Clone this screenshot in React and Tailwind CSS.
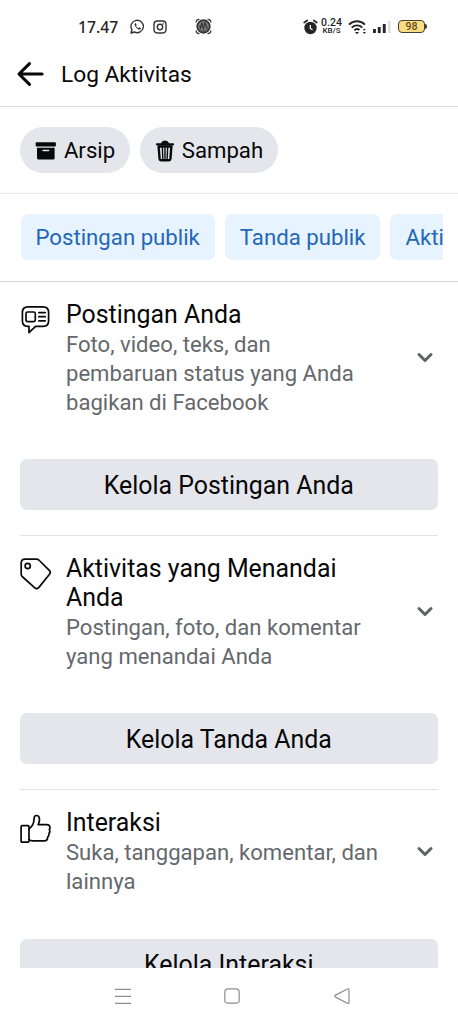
const SHORTCUTS = [
  { id: "archive", label: "Arsip" },
  { id: "trash", label: "Sampah" },
];

const FILTERS = ["Postingan publik", "Tanda publik", "Aktivitas"];

const SECTIONS = [
  {
    id: "post",
    title: "Postingan Anda",
    desc: "Foto, video, teks, dan pembaruan status yang Anda bagikan di Facebook",
    button: "Kelola Postingan Anda",
  },
  {
    id: "tag",
    title: "Aktivitas yang Menandai Anda",
    desc: "Postingan, foto, dan komentar yang menandai Anda",
    button: "Kelola Tanda Anda",
  },
  {
    id: "like",
    title: "Interaksi",
    desc: "Suka, tanggapan, komentar, dan lainnya",
    button: "Kelola Interaksi",
  },
];

function ShortcutIcon({ name }) {
  if (name === "archive") {
    return (
      <svg width="22" height="20" viewBox="0 0 22 20" fill="#080809" className="shrink-0">
        <rect x="0.7" y="1.2" width="20.2" height="4.4" rx="1" />
        <path d="M2 6.700h17.600v10.200a1.600 1.600 0 0 1-1.600 1.600H3.600A1.600 1.600 0 0 1 2 16.900z" />
        <rect x="7.300" y="8.700" width="7" height="1.600" rx="0.800" fill="#e4e6eb" />
      </svg>
    );
  }
  return (
    <svg width="20" height="22" viewBox="0 0 20 22" fill="none" stroke="#080809" className="shrink-0">
      <path d="M2 4.300h16" strokeWidth="2.200" strokeLinecap="round" />
      <path d="M6.300 3.600C7 1.300 8 1 10 1s3 .3 3.700 2.600z" fill="#080809" strokeWidth="0.600" />
      <path d="M3.600 6.500l1 12.200q.2 1.600 1.800 1.600h7.200q1.600 0 1.800-1.600l1-12.200z" strokeWidth="2.400" strokeLinejoin="round" />
      <path d="M7.400 8l.4 10.500M12.600 8l-.4 10.500M10 8v10.500" strokeWidth="1.400" strokeLinecap="round" />
    </svg>
  );
}

function SectionIcon({ name }) {
  return (
    <svg
      width="32"
      height="32"
      viewBox="0 0 32 32"
      fill="none"
      stroke="#080809"
      strokeWidth="1.700"
      strokeLinejoin="round"
      strokeLinecap="round"
      className="shrink-0"
    >
      {name === "post" && (
        <>
          <path d="M7.500 2.800H23q5.600 0 5.600 5.600v8.400q0 5.600-5.600 5.600H15.500L9 28.600v-6.200H8q-5.600 0-5.600-5.600V8.400q0-5.600 5.600-5.600z" />
          <rect x="6" y="8" width="9.300" height="9.600" rx="1.600" />
          <path d="M18.800 8.600h6.400M18.800 12.700h6.400M18.800 16.800h6.400" />
        </>
      )}
      {name === "tag" && (
        <>
          <path d="M5 1.100h11.500q1.300 0 2.300.9l10.500 10.400q2 2.100 0 4.100L18.700 29.600q-2.100 2-4.200 0L2.200 18.500q-1-.9-1-2.300V4.900q0-3.800 3.800-3.800z" />
          <circle cx="7.700" cy="8" r="2.600" />
        </>
      )}
      {name === "like" && (
        <>
          <path d="M2.100 13.700h5.900q1 0 1 1v14.400q0 1-1 1H2.100q-1 0-1-1V14.700q0-1 1-1z" />
          <path d="M9 17c3.500-2.700 5-5.300 5-9.500 0-2.300.7-4 2.300-4 2.100 0 3.200 1.700 3.200 4.200 0 2.100-.7 3.500-1.300 5h8.200c2 0 3.600 1.300 3.600 3 0 .8-.3 1.400-.7 1.900.8 1.400.6 3-.4 4 .3 1.600-.2 2.900-1.200 3.500-.1 2.300-1.200 3.700-3.300 3.700H12.400q-2 0-3.400-1.300" />
        </>
      )}
    </svg>
  );
}

function StatusBar() {
  return (
    <div className="flex h-[46px] shrink-0 items-center pt-[7px] pr-[31px] pl-[78px] text-[#252525]">
      <span className="w-[52px] font-['Noto_Sans'] text-[15.700px] leading-5 font-medium">17.47</span>
      {/* WhatsApp */}
      <svg width="15" height="15" viewBox="0 0 15 15" fill="none" stroke="#333" strokeWidth="1.400">
        <path d="M1 14l.9-3.300A6.200 6.200 0 1 1 4.400 13z" strokeLinejoin="round" />
        <path d="M5.500 4c-1.200.5-1.200 1.700-.3 3.200 1 1.700 2.600 3 4 3.400 1 .2 1.800-.5 1.900-1.300L9.300 8.300l-.9.900C7.300 8.700 6.500 7.800 6 6.900l.7-.9z" fill="#333" stroke="none" />
      </svg>
      {/* Instagram */}
      <svg width="14" height="14" viewBox="0 0 14 14" fill="none" stroke="#333" strokeWidth="1.400" className="ml-2">
        <rect x="1" y="1" width="12" height="12" rx="3.400" />
        <circle cx="7" cy="7" r="2.700" />
        <circle cx="10.300" cy="3.700" r="0.200" />
      </svg>
      {/* Emblem */}
      <svg width="17" height="17" viewBox="0 0 17 17" fill="none" stroke="#333" className="ml-[28px]">
        <circle cx="8.500" cy="8.500" r="6.300" fill="#808080" strokeWidth="1.700" />
        <path d="M1.200 4.500q-.3-3 3.300-3.200M15.800 4.500q.3-3-3.300-3.200M1.200 12.500q-.3 3 3.300 3.200M15.800 12.500q.3 3-3.300 3.200" strokeWidth="1.300" />
        <path d="M5 11.500L7 4.500l1.500 7L10 4.500l2.500 7M4 8.500h3M6 13h5" strokeWidth="1.100" />
      </svg>

      <div className="ml-auto flex items-center">
        <svg width="15" height="16" viewBox="0 0 15 16" fill="none" stroke="#252525">
          <circle cx="7.500" cy="9" r="6.200" fill="#252525" stroke="none" />
          <path d="M1.200 3.500l3-2M13.800 3.500l-3-2" strokeWidth="1.700" strokeLinecap="round" />
          <path d="M7.300 6v3.400l2.200 1.300" stroke="#fff" strokeWidth="1.200" />
        </svg>
        <div className="ml-[2px] flex w-[23px] flex-col items-center font-medium">
          <span className="text-[10.500px] leading-[9px]">0.24</span>
          <span className="text-[8px] leading-[8px]">KB/S</span>
        </div>
        <svg width="20" height="16" viewBox="0 0 20 16" fill="none" stroke="#252525" strokeWidth="1.900" className="ml-[5px]">
          <path d="M1 5.600a11.300 11.300 0 0 1 16 0M3.700 8.600a7.500 7.500 0 0 1 10.600 0M6.300 11.300a4 4 0 0 1 5.200-.3" />
          <path d="M9 15.200l-2-2.200h4z" fill="#252525" stroke="none" />
          <path d="M14.700 11.300l1.600-1.900 1.600 1.900zM14.700 13l1.600 1.900 1.600-1.900z" fill="#252525" stroke="none" />
        </svg>
        <svg width="19" height="14" viewBox="0 0 19 14" fill="#252525" className="ml-[5px]">
          <rect x="0" y="9" width="2.900" height="4" rx="0.500" />
          <rect x="4.800" y="7" width="2.900" height="6" rx="0.500" />
          <rect x="9.800" y="4" width="2.900" height="9" rx="0.500" />
          <rect x="15" y="0.800" width="2.600" height="12.200" rx="0.500" fill="#ddd" />
        </svg>
        <div className="ml-[6px] flex h-[13px] w-[27px] items-center justify-center rounded-[4px] border border-[#454033] bg-[#fbdc82] text-[10.500px] font-medium text-[#5d4c1e]">
          98
        </div>
        <div className="h-[5px] w-[2px] rounded-r-[2px] bg-[#454033]" />
      </div>
    </div>
  );
}

function NavBar() {
  return (
    <div className="flex h-14 shrink-0 items-center justify-between bg-white pr-[107px] pl-[114px]">
      <svg width="18" height="18" viewBox="0 0 18 18" stroke="#8e8e8e" strokeWidth="1.200">
        <path d="M1 2.400h16M1 9.400h16M1 16.300h16" />
      </svg>
      <svg width="18" height="18" viewBox="0 0 18 18" fill="none" stroke="#8e8e8e" strokeWidth="1.200" className="mr-px">
        <rect x="1.800" y="1.800" width="14.400" height="14.400" rx="3.200" />
      </svg>
      <svg width="18" height="18" viewBox="0 0 18 18" fill="none" stroke="#8e8e8e" strokeWidth="1.200" strokeLinejoin="round">
        <path d="M2.500 8.100L14.400 2q1.600-.7 1.600 1v12.200q0 1.700-1.600 1L2.500 10.100q-1.700-1 0-2z" />
      </svg>
    </div>
  );
}

export default function ActivityLogPage() {
  return (
    <div className="flex h-screen w-full flex-col overflow-hidden bg-white font-['Roboto',sans-serif] text-[#080809]">
      <StatusBar />

      {/* Header */}
      <div className="flex h-[61px] shrink-0 items-center border-b border-[#dcdcdc] pb-[3px] pl-4">
        <button className="mb-[2px] flex">
          <svg width="29" height="26" viewBox="0 0 29 26" fill="none" stroke="#080809" strokeWidth="3.100" strokeLinecap="round" strokeLinejoin="round">
            <path d="M13.500 2.700L3 13l10.500 10.300M3.500 13h22.600" />
          </svg>
        </button>
        <h1 className="ml-4 pt-px text-[22.700px] leading-7">Log Aktivitas</h1>
      </div>

      {/* Shortcuts */}
      <div className="flex h-[87px] shrink-0 items-center gap-[10px] border-b border-[#ebebeb] pl-[20.400px]">
        {SHORTCUTS.map((item) => (
          <button
            key={item.id}
            className="flex h-[46px] items-center gap-[7px] rounded-full bg-[#e4e6eb] pr-[15px] pl-[14.500px] pt-px text-[22.200px]"
          >
            <ShortcutIcon name={item.id} />
            {item.label}
          </button>
        ))}
      </div>

      {/* Filters */}
      <div className="h-[87.500px] shrink-0 border-b border-[#d4d4d4] px-[15px] pt-5">
        <div className="flex gap-[10px] overflow-hidden pl-[5.500px]">
          {FILTERS.map((label) => (
            <button
              key={label}
              className="h-[46px] shrink-0 rounded-[7px] bg-[#e7f3ff] px-[15px] pt-px text-[22.200px] text-[#2467b8]"
            >
              {label}
            </button>
          ))}
        </div>
      </div>

      {/* Sections */}
      <div className="min-h-0 flex-1 overflow-hidden pt-[0.500px] pr-[20.500px] pl-5">
        {SECTIONS.map((section) => (
          <section key={section.id} className="border-b border-[#e2e2e2] pt-[18px] pb-[25px]">
            <div className="flex items-center">
              <div className="self-start pt-1">
                <SectionIcon name={section.id} />
              </div>
              <div className="ml-[14px] w-[320px] shrink-0">
                <h2 className="text-[24.900px] leading-[29px]">{section.title}</h2>
                <p className="pt-px text-[22.100px] leading-[29px] text-[#65686c]">{section.desc}</p>
              </div>
              <svg width="18" height="14" viewBox="0 0 18 14" fill="none" stroke="#606266" strokeWidth="3" strokeLinecap="round" strokeLinejoin="round" className="mb-px ml-[30px] shrink-0">
                <path d="M3 3.500l6 6 6-6" />
              </svg>
            </div>
            <button className="mt-[42.200px] h-[51px] w-full rounded-[7px] bg-[#e4e6eb] pt-px text-[24.900px]">
              {section.button}
            </button>
          </section>
        ))}
      </div>

      <NavBar />
    </div>
  );
}
